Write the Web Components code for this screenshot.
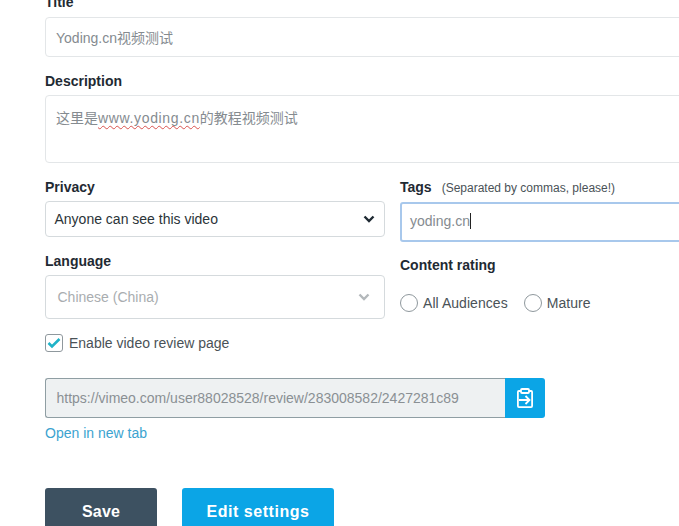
<!DOCTYPE html>
<html><head><meta charset="utf-8"><style>
html,body{margin:0;height:526px;overflow:hidden;background:#fff}
body{font-family:"Liberation Sans","Noto Sans CJK SC",sans-serif}
</style></head><body>
<settings-form></settings-form>
<script>
const def=(n,html)=>customElements.define(n,class extends HTMLElement{constructor(){super();this.attachShadow({mode:'open'}).innerHTML=html}});
def('field-label',`<style>:host{display:block;font-size:14px;line-height:16px;font-weight:700;color:#1f2a33}</style><slot></slot>`);
def('text-box',`<style>:host{display:flex;box-sizing:border-box;width:100%;border:1px solid #e3e6e8;border-radius:4px;padding:0 10px;font-size:14px;color:#858b90;background:#fff}</style><slot></slot>`);
def('select-box',`<style>:host{display:flex;align-items:center;justify-content:space-between;box-sizing:border-box;width:340px;border:1px solid #d5dadd;border-radius:4px;font-size:14px;background:#fff}svg{display:block}</style><slot></slot><slot name="i"></slot>`);
def('radio-opt',`<style>:host{display:inline-flex;align-items:center;gap:5px;font-size:14px;color:#4a5257;letter-spacing:.05px}i{display:block;box-sizing:border-box;width:18px;height:18px;border:1px solid #8f989d;border-radius:50%}</style><i></i><slot></slot>`);
def('action-button',`<style>:host{display:flex;align-items:center;justify-content:center;box-sizing:border-box;height:48px;border-radius:3px;font-size:16px;font-weight:700;color:#fff;letter-spacing:.2px}</style><slot></slot>`);
const chev=(c)=>`<svg slot="i" width="12" height="8" viewBox="0 0 12 8"><path d="M1.5 1.5 6 6l4.5-4.5" fill="none" stroke="${c}" stroke-width="2.4"/></svg>`;
def('settings-form',`<style>
:host{display:block;width:900px;padding-left:45px;margin-top:-6px}
.t{height:40px;align-items:center;width:100%}
.ta{height:68px;padding-top:11px;align-items:flex-start;box-sizing:border-box}
.s{letter-spacing:.65px;text-decoration:underline wavy #d9534f 1px;text-underline-offset:2px;text-decoration-skip-ink:none}
.cols{display:flex;gap:15px;margin-top:16px}
.l{width:340px;flex:none}.r{flex:1;min-width:0}
.tag{height:40px;border:2px solid #a8c8ec;border-radius:3px;padding:0 8px 2px;align-items:center}
.caret{display:inline-block;width:1px;height:16px;background:#222;margin-left:0}
small{font-size:12px;font-weight:400;color:#4a5257;margin-left:10px}
.ck{display:flex;align-items:center;gap:6px;margin-top:14px;height:19px;font-size:14px;color:#4a5257}
.ck b{box-sizing:border-box;width:18px;height:18px;border:1px solid #8f989d;border-radius:3px;display:flex;align-items:center;justify-content:center}
.url{display:flex;width:500px;height:40px;margin-top:26px}
.url div{flex:1;box-sizing:border-box;border:1px solid #8f9ea3;border-right:0;border-radius:3px 0 0 3px;background:#eef1f2;color:#8a9094;font-size:14px;line-height:38px;padding-left:10.500px}
.url span{width:40px;background:#0ba5e6;border-radius:0 3px 3px 0;display:flex;align-items:center;justify-content:center}
a{display:block;margin-top:7px;font-size:14px;line-height:16px;color:#3ba3d0;text-decoration:none}
.btns{display:flex;gap:25px;margin-top:47px}
</style>
<field-label>Title</field-label>
<text-box class="t" style="margin-top:7px">Yoding.cn视频测试</text-box>
<field-label style="margin-top:16px">Description</field-label>
<text-box class="ta" style="margin-top:6px"><span>这里是<span class="s">www.yoding.cn</span>的教程视频测试</span></text-box>
<div class="cols">
<div class="l">
<field-label>Privacy</field-label>
<select-box style="height:36px;margin-top:6px;padding:0 9px 0 8.500px;color:#2b3439">Anyone can see this video${chev('#1f2a33')}</select-box>
<field-label style="margin-top:16px">Language</field-label>
<select-box style="height:44px;margin-top:6px;padding:0 14px 0 11.500px;color:#a9adb0">Chinese (China)${chev('#b3b8bb')}</select-box>
<div class="ck"><b><svg width="14" height="12" viewBox="0 0 14 12"><path d="M1.5 6 5 9.5 12.5 2" fill="none" stroke="#1fb3c8" stroke-width="2.6"/></svg></b>Enable video review page</div>
</div>
<div class="r">
<field-label>Tags<small>(Separated by commas, please!)</small></field-label>
<text-box class="tag" style="margin-top:6px">yoding.cn<i class="caret"></i></text-box>
<field-label style="margin-top:15px">Content rating</field-label>
<div style="display:flex;gap:16px;margin-top:21px"><radio-opt>All Audiences</radio-opt><radio-opt>Mature</radio-opt></div>
</div>
</div>
<div class="url"><div>https://vimeo.com/user88028528/review/283008582/2427281c89</div><span><svg width="16" height="20" viewBox="0 0 16 20" fill="none" stroke="#fff" stroke-width="1.800"><path d="M4 3H1.900a1 1 0 0 0-1 1V18.100a1 1 0 0 0 1 1h12.200a1 1 0 0 0 1-1V4a1 1 0 0 0-1-1H12"/><rect x="4" y="1" width="8" height="4" rx="1"/><path d="M2 12h10.500M8.500 8l4 4-4 4"/></svg></span></div>
<a>Open in new tab</a>
<div class="btns"><action-button style="width:112px;background:#3d5161">Save</action-button><action-button style="width:152px;background:#0ba5e6;letter-spacing:.55px">Edit settings</action-button></div>`);
</script>
</body></html>
